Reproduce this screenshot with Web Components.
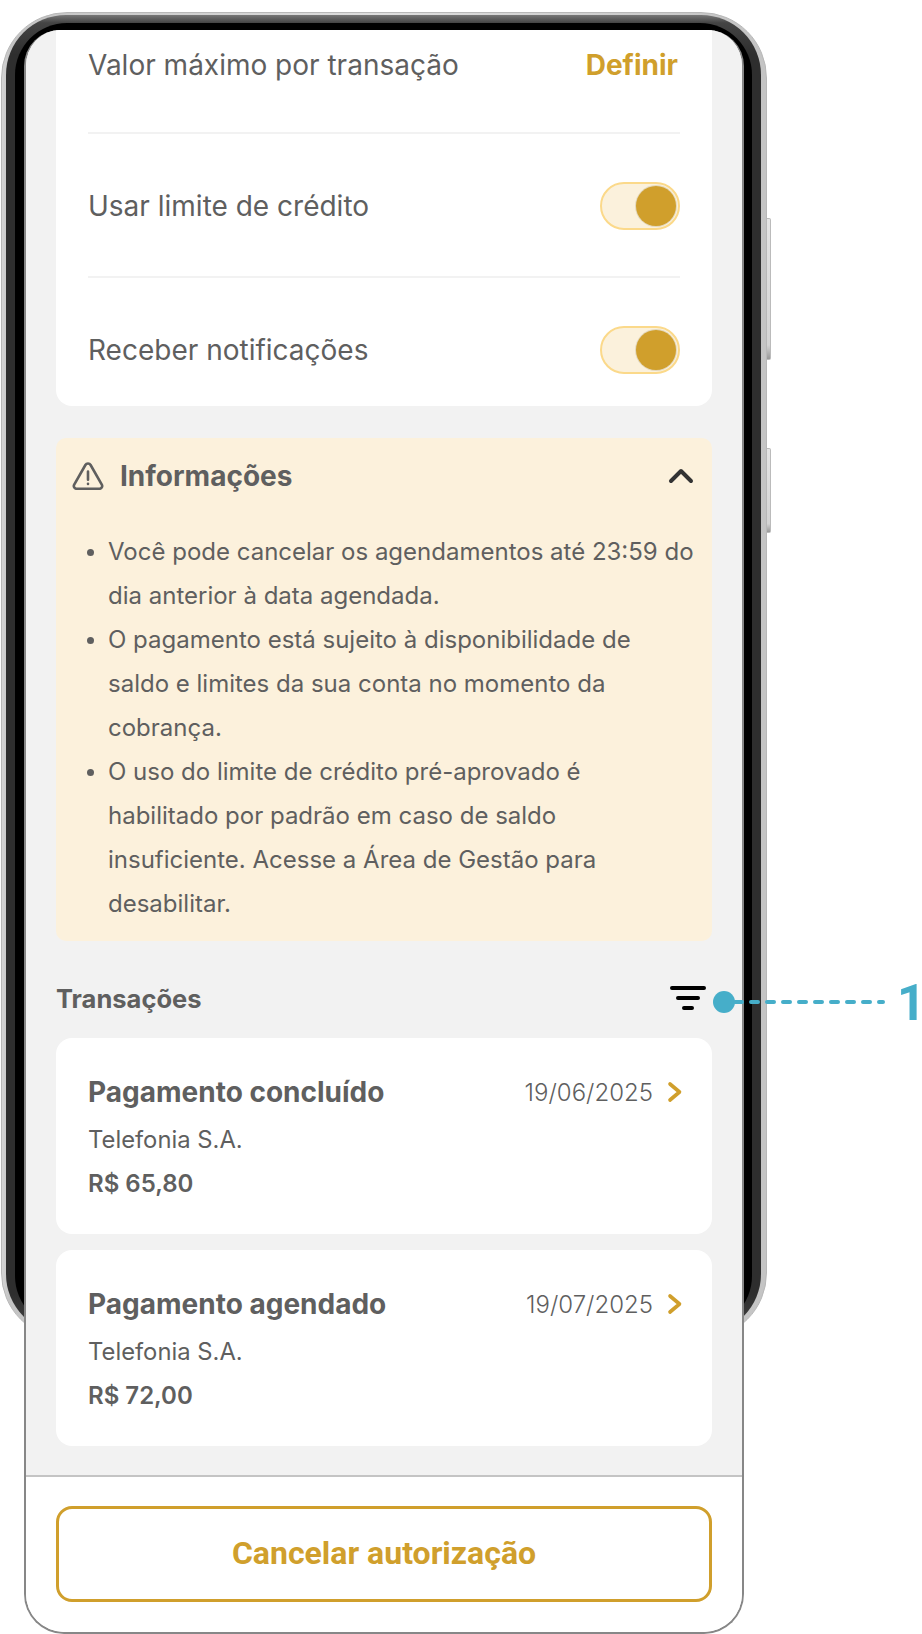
<!DOCTYPE html>
<html lang="pt-BR">
<head>
<meta charset="utf-8">
<title>Autorização</title>
<style>
  html, body { margin: 0; padding: 0; background: #fff; }
  body { width: 922px; height: 1634px; overflow: hidden; font-family: Inter, "Liberation Sans", sans-serif; }
</style>
</head>
<body>

<phone-mockup></phone-mockup>

<template id="phone-tpl">
  <style>
    :host { display: block; position: relative; width: 922px; height: 1634px; overflow: hidden; }
    .shell {
      position: absolute; left: 1px; top: 12px; width: 766px; height: 1327px;
      box-sizing: border-box; border-radius: 66px;
      background: linear-gradient(90deg, #d4d4d4, #c4c4c4 1%, #dedede 50%, #c4c4c4 99%); border: 1px solid #b8b8b8;
    }
    .shell::before {
      content: ''; position: absolute; inset: 2px 5px 4px 4px; border-radius: 60px;
      background: linear-gradient(#777, #444 .6%, #2e2e2e 3%, #2e2e2e 97%, #444);
    }
    .shell::after {
      content: ''; position: absolute; inset: 10px 14px 10px 13px; border-radius: 52px; background: #000;
    }
    .btn { position: absolute; left: 767px; width: 4px; box-sizing: border-box; background: linear-gradient(#e4e4e4, #d4d4d4 90%, #999); border: 1px solid #bbb; border-left: 0; border-radius: 0 2px 2px 0; }
    .b1 { top: 218px; height: 142px; }
    .b2 { top: 448px; height: 85px; }
    .screen {
      position: relative; margin: 30px 0 0 24px; width: 720px; height: 1604px;
      box-sizing: border-box; border: solid #878787; border-width: 0 2px 2px 2px;
      border-radius: 36px 36px 40px 40px; background: #fff; overflow: hidden;
      display: flex; flex-direction: column;
    }
    .scroll {
      flex: 1; min-height: 0; background: #f2f2f2; padding: 0 30px;
      display: flex; flex-direction: column;
    }
    .foot { border-top: 2px solid #c4c4c4; padding: 29px 30px 30px; background: #fff; }
  </style>
  <div class="shell"></div>
  <div class="btn b1"></div>
  <div class="btn b2"></div>
  <div class="screen">
    <div class="scroll">
      <settings-card></settings-card>
      <info-panel></info-panel>
      <tx-header></tx-header>
      <tx-card title="Pagamento concluído" date="19/06/2025" who="Telefonia S.A." amount="R$ 65,80"></tx-card>
      <tx-card title="Pagamento agendado" date="19/07/2025" who="Telefonia S.A." amount="R$ 72,00" style="margin-top:16px"></tx-card>
    </div>
    <div class="foot"><outline-button>Cancelar autorização</outline-button></div>
  </div>
  <call-out></call-out>
</template>

<template id="settings-tpl">
  <style>
    :host { display: block; background: #fff; border-radius: 0 0 16px 16px; padding: 0 32px; height: 376px; box-sizing: border-box; color: #5f5f5f; font: 400 28px Inter, sans-serif; }
    .row { display: flex; align-items: center; justify-content: space-between; box-sizing: border-box; }
    .r1 { height: 104px; padding-bottom: 33px; border-bottom: 2px solid #f2f2f2; }
    .r2 { height: 144px; padding-top: 2px; border-bottom: 2px solid #f2f2f2; }
    .r3 { height: 128px; padding-bottom: 32px; padding-top: 48px; }
    .def { font: 700 28px Inter, sans-serif; color: #d09f2c; margin-right: 2px; }
  </style>
  <div class="row r1"><span>Valor máximo por transação</span><span class="def">Definir</span></div>
  <div class="row r2"><span>Usar limite de crédito</span><toggle-switch></toggle-switch></div>
  <div class="row r3"><span>Receber notificações</span><toggle-switch></toggle-switch></div>
</template>

<template id="toggle-tpl">
  <style>
    :host { display: block; width: 80px; height: 48px; box-sizing: border-box; border: 2px solid #fbd98a; border-radius: 24px; background: #fbf1dc; position: relative; }
    i { position: absolute; right: 2px; top: 2px; width: 40px; height: 40px; border-radius: 50%; background: #d09f2c; box-shadow: 0 0 0 1px #e3d8bd; }
  </style>
  <i></i>
</template>

<template id="info-tpl">
  <style>
    :host { display: block; margin-top: 32px; height: 503px; box-sizing: border-box; background: #fcf1dc; border-radius: 10px; color: #5f5f5f; }
    header { display: flex; align-items: center; height: 78px; box-sizing: border-box; padding: 0 18px 2px 16px; }
    h3 { flex: 1; margin: 0 0 0 16px; font: 700 28px Inter, sans-serif; }
    ul { margin: 0; padding: 14px 16px 0 52px; list-style: none; font: 400 24px/44px Inter, sans-serif; }
    li { position: relative; }
    li::before { content: ''; position: absolute; left: -21px; top: 19px; width: 7px; height: 7px; border-radius: 50%; background: #5f5f5f; }
  </style>
  <header>
    <svg width="32" height="28" viewBox="0 0 32 28" fill="none" stroke="#5f5f5f" stroke-width="2.6" stroke-linecap="round" stroke-linejoin="round">
      <path d="M13.4 3 2.2 22.6A2.8 2.8 0 0 0 4.6 26.8h22.8a2.8 2.8 0 0 0 2.4-4.2L18.6 3a3 3 0 0 0-5.2 0Z"/>
      <path d="M16 9.5v8.2M16 21.8v.2"/>
    </svg>
    <h3>Informações</h3>
    <svg width="26" height="16" viewBox="0 0 26 16" fill="none" stroke="#333" stroke-width="4" stroke-linecap="round" stroke-linejoin="round"><path d="M3 13 13 3l10 10"/></svg>
  </header>
  <ul>
    <li>Você pode cancelar os agendamentos até 23:59 do dia anterior à data agendada.</li>
    <li>O pagamento está sujeito à disponibilidade de saldo e limites da sua conta no momento da cobrança.</li>
    <li>O uso do limite de crédito pré-aprovado é habilitado por padrão em caso de saldo insuficiente. Acesse a Área de Gestão para desabilitar.</li>
  </ul>
</template>

<template id="txhead-tpl">
  <style>
    :host { display: flex; align-items: center; justify-content: space-between; height: 97px; padding: 16px 5px 0 0; box-sizing: border-box; color: #5f5f5f; font: 700 25.5px Inter, sans-serif; }
    span { margin-top: 2px; }
  </style>
  <span>Transações</span>
  <svg width="38" height="26" viewBox="0 0 38 26" fill="none" stroke="#000" stroke-width="4" stroke-linecap="round"><path d="M3 3h32M9 13h20M15 23h8"/></svg>
</template>

<template id="txcard-tpl">
  <style>
    :host { display: block; background: #fff; border-radius: 16px; height: 196px; box-sizing: border-box; padding: 34px 29px 0 32px; color: #5f5f5f; }
    .top { display: flex; align-items: center; height: 40px; }
    b { flex: 1; font: 700 28px Inter, sans-serif; }
    .date { font: 300 24px Inter, sans-serif; margin-right: 14px; }
    .who { font: 400 23.8px/28px Inter, sans-serif; margin-top: 14px; }
    .amt { font: 600 24px/28px Inter, sans-serif; margin-top: 16px; }
  </style>
  <div class="top">
    <b id="t"></b><span class="date" id="d"></span>
    <svg width="16" height="22" viewBox="0 0 16 22" fill="none" stroke="#d09f2c" stroke-width="3.6" stroke-linecap="round" stroke-linejoin="round"><path d="M3 3l9.5 8L3 19"/></svg>
  </div>
  <div class="who" id="w"></div>
  <div class="amt" id="a"></div>
</template>

<template id="btn-tpl">
  <style>
    :host { display: flex; align-items: center; justify-content: center; height: 96px; padding-bottom: 2px; box-sizing: border-box; border: 3px solid #d09f2c; border-radius: 16px; color: #d09f2c; font: 700 32px Roboto, sans-serif; }
  </style>
  <slot></slot>
</template>

<template id="callout-tpl">
  <style>
    :host { position: absolute; left: 713px; top: 986px; width: 209px; height: 60px; display: block; color: #46aec9; }
    i { position: absolute; left: 0; top: 5px; width: 22px; height: 22px; border-radius: 50%; background: #46aec9; }
    svg { position: absolute; left: 20px; top: 12px; }
    span { position: absolute; left: 184px; top: -13px; font: 700 50px/60px Roboto, sans-serif; }
  </style>
  <i></i>
  <svg width="152" height="8" viewBox="0 0 152 8" fill="none" stroke="#46aec9" stroke-width="4" stroke-linecap="round" stroke-dasharray="7 9"><path d="M2 4h148"/></svg>
  <span>1</span>
</template>

<script>
  // every element just clones its template into an open root
  function cloneFrom(el, id) {
    const root = el.attachShadow({ mode: 'open' });
    root.appendChild(document.getElementById(id).content.cloneNode(true));
    return root;
  }
  const simple = {
    'phone-mockup': 'phone-tpl',
    'settings-card': 'settings-tpl',
    'toggle-switch': 'toggle-tpl',
    'info-panel': 'info-tpl',
    'tx-header': 'txhead-tpl',
    'outline-button': 'btn-tpl',
    'call-out': 'callout-tpl'
  };
  for (const tag in simple) {
    customElements.define(tag, class extends HTMLElement {
      connectedCallback() { if (!this.shadowRoot) cloneFrom(this, simple[tag]); }
    });
  }
  class TxCard extends HTMLElement {
    connectedCallback() {
      const root = cloneFrom(this, 'txcard-tpl');
      root.getElementById('t').textContent = this.getAttribute('title');
      root.getElementById('d').textContent = this.getAttribute('date');
      root.getElementById('w').textContent = this.getAttribute('who');
      root.getElementById('a').textContent = this.getAttribute('amount');
    }
  }
  customElements.define('tx-card', TxCard);
</script>
</body>
</html>
